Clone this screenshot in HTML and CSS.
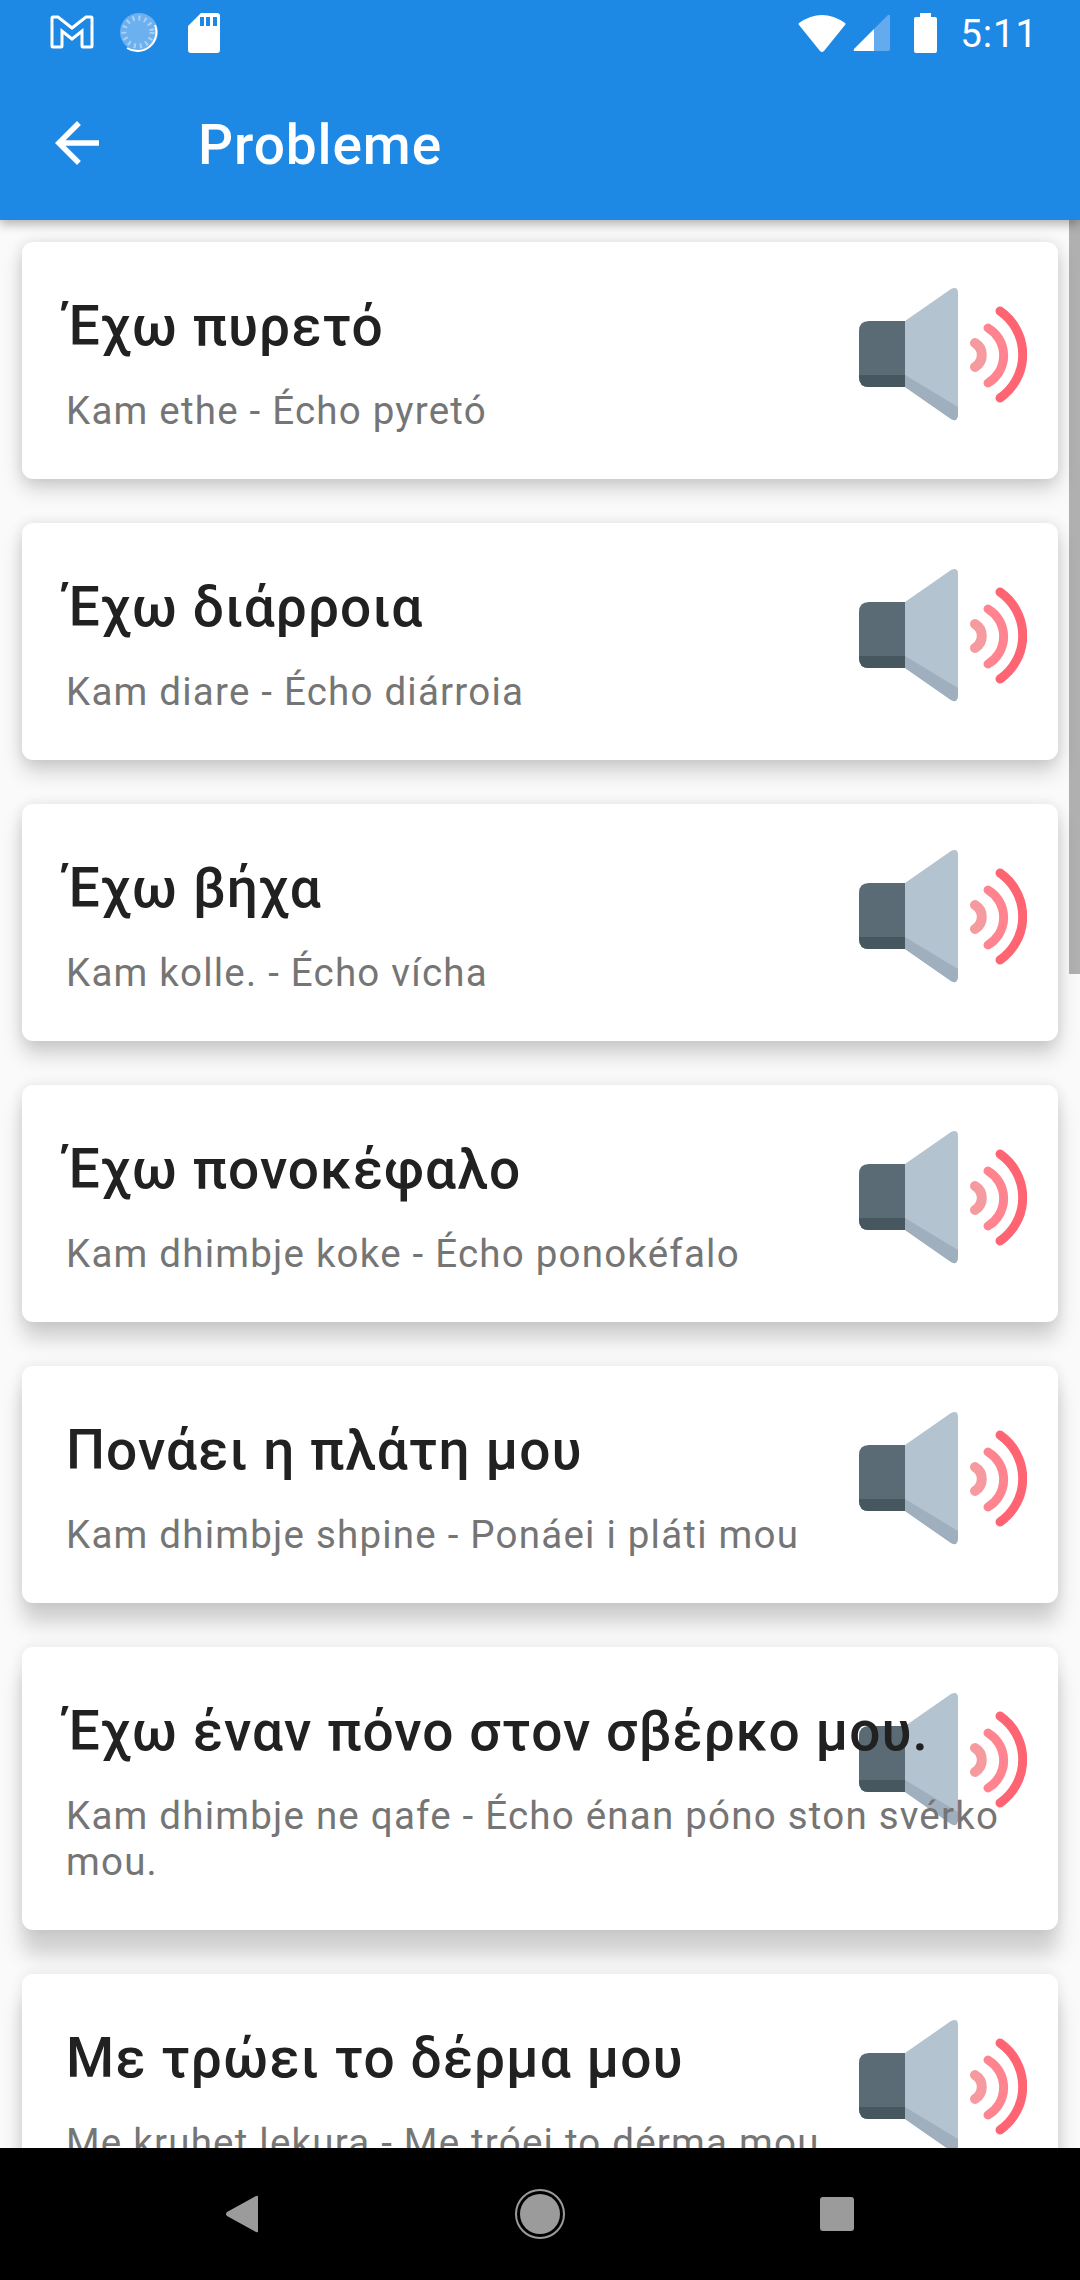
FILE: index.html
```html
<!DOCTYPE html>
<html lang="el">
<head>
    <meta charset="UTF-8">
    <meta name="viewport" content="width=device-width, initial-scale=1.0">
    <title>Probleme</title>
    <link rel="stylesheet" href="styles.css">
</head>
<body>
<svg class="defs" width="0" height="0">
    <symbol id="speaker" viewBox="0 0 168 134">
        <path d="M46 34H10Q0 34 0 44V90Q0 100 10 100H46Z" fill="#5a6b75"/>
        <path d="M0 88V90Q0 100 10 100H46V88Z" fill="#47575f"/>
        <path d="M46 34L92 2Q99 -1 99 6V126Q99 136 92 132L46 100Z" fill="#b4c3d0"/>
        <path d="M46 88L99 120V126Q99 136 92 132L46 100Z" fill="#9fafbe"/>
        <path d="M116 56A14 14 0 0 1 116 80" class="wave wave-in"/>
        <path d="M129 41A32 32 0 0 1 129 96" class="wave wave-mid"/>
        <path d="M141 24A53 53 0 0 1 141 111" class="wave wave-out"/>
    </symbol>
</svg>

<div class="screen">
    <header class="top">
        <div class="status">
            <div class="status-left">
                <svg class="ic-gmail" viewBox="0 0 44 34"><path d="M3 2H8L22 13L36 2H41Q42 2 42 3V31Q42 32 41 32H33Q32 32 32 31V16L22 24L12 16V31Q12 32 11 32H3Q2 32 2 31V3Q2 2 3 2Z" fill="none" stroke="#fff" stroke-width="3"/></svg>
                <svg class="ic-sync" viewBox="0 0 40 40">
                    <circle cx="20" cy="19" r="19" fill="#6cb0f0"/>
                    <path d="M36 12A19 19 0 0 1 8 35" fill="none" stroke="#fff" stroke-width="2"/>
                    <circle cx="19" cy="19" r="14" fill="none" stroke="#a9d0f5" stroke-width="5" stroke-dasharray="2 4"/>
                </svg>
                <svg class="ic-sd" viewBox="0 0 32 40"><path d="M13 0H29Q32 0 32 3V37Q32 40 29 40H3Q0 40 0 37V13Z" fill="#fff"/><path d="M12 4h4v9h-4zM18 4h4v9h-4zM25 4h4v9h-4z" fill="#1e88e5"/></svg>
            </div>
            <div class="status-right">
                <svg class="ic-wifi" viewBox="0 0 48 38"><path d="M1 9Q24 -7 47 9Q48 10 47 11L26 37Q24 39 22 37L1 11Q0 10 1 9Z" fill="#fff"/></svg>
                <svg class="ic-signal" viewBox="0 0 37 38">
                    <path d="M21 15L35 1Q37 0 37 2V35Q37 37 35 37H21Z" fill="#64aaee"/>
                    <path d="M21 15V37H2Q0 37 1 35Z" fill="#fff"/>
                </svg>
                <svg class="ic-batt" viewBox="0 0 23 40"><path d="M6 0H17V4H21Q23 4 23 6V38Q23 40 21 40H2Q0 40 0 38V6Q0 4 2 4H6Z" fill="#fff"/></svg>
                <span class="clock">5:11</span>
            </div>
        </div>
        <div class="toolbar">
            <svg class="ic-back" viewBox="0 0 24 24"><path d="M20 11H7.83l5.59-5.59L12 4l-8 8 8 8 1.41-1.41L7.83 13H20v-2z" fill="#fff"/></svg>
            <h1>Probleme</h1>
        </div>
    </header>

    <main class="list">
        <div class="thumb"></div>

        <div class="card card-1">
            <svg class="speaker"><use href="#speaker"/></svg>
            <div class="card-text">
                <h2>Έχω πυρετό</h2>
                <p>Kam ethe - Écho pyretó</p>
            </div>
        </div>
        <div class="card card-2">
            <svg class="speaker"><use href="#speaker"/></svg>
            <div class="card-text">
                <h2>Έχω διάρροια</h2>
                <p>Kam diare - Écho diárroia</p>
            </div>
        </div>
        <div class="card card-3">
            <svg class="speaker"><use href="#speaker"/></svg>
            <div class="card-text">
                <h2>Έχω βήχα</h2>
                <p>Kam kolle. - Écho vícha</p>
            </div>
        </div>
        <div class="card card-4">
            <svg class="speaker"><use href="#speaker"/></svg>
            <div class="card-text">
                <h2>Έχω πονοκέφαλο</h2>
                <p>Kam dhimbje koke - Écho ponokéfalo</p>
            </div>
        </div>
        <div class="card card-5">
            <svg class="speaker"><use href="#speaker"/></svg>
            <div class="card-text">
                <h2>Πονάει η πλάτη μου</h2>
                <p>Kam dhimbje shpine - Ponáei i pláti mou</p>
            </div>
        </div>
        <div class="card card-6">
            <svg class="speaker"><use href="#speaker"/></svg>
            <div class="card-text">
                <h2>Έχω έναν πόνο στον σβέρκο μου.</h2>
                <p>Kam dhimbje ne qafe - Écho énan póno ston svérko mou.</p>
            </div>
        </div>
        <div class="card card-6">
            <svg class="speaker"><use href="#speaker"/></svg>
            <div class="card-text">
                <h2>Με τρώει το δέρμα μου</h2>
                <p>Me kruhet lekura - Me tróei to dérma mou</p>
            </div>
        </div>
    </main>

    <nav class="navbar">
        <svg class="nav-back" viewBox="0 0 32 38"><path d="M30 1Q32 0 32 2V36Q32 38 30 37L1 21Q-1 19 1 17Z" fill="#9b9b9b"/></svg>
        <svg class="nav-home" viewBox="0 0 50 50"><circle cx="25" cy="25" r="24" fill="none" stroke="#9b9b9b" stroke-width="2"/><circle cx="25" cy="25" r="20" fill="#9b9b9b"/></svg>
        <div class="nav-square"></div>
    </nav>
</div>
</body>
</html>
```
FILE: styles.css
```css
* {
    box-sizing: border-box;
}

body {
    margin: 0;
    font-family: Roboto, "Noto Sans", sans-serif;
    background-color: #fafafa;
}

.defs {
    display: block;
    height: 0;
}

.screen {
    display: flex;
    flex-direction: column;
    width: 1080px;
    height: 2280px;
    overflow: hidden;
}

.top {
    background-color: #1e88e5;
    color: #fff;
    height: 220px;
    box-shadow: 0 4px 10px rgba(0, 0, 0, 0.3);
    position: relative;
    z-index: 2;
    flex: none;
}

.status {
    display: flex;
    justify-content: space-between;
    align-items: center;
    height: 66px;
    padding: 0 42px 0 50px;
}

.status-left,
.status-right {
    display: flex;
    align-items: center;
}

.ic-gmail {
    width: 44px;
    height: 34px;
    margin-bottom: 2px;
}

.ic-sync {
    width: 40px;
    height: 40px;
    margin-left: 25px;
}

.ic-sd {
    width: 32px;
    height: 40px;
    margin-left: 29px;
}

.ic-wifi {
    width: 48px;
    height: 38px;
}

.ic-signal {
    width: 37px;
    height: 38px;
    margin-left: 7px;
}

.ic-batt {
    width: 23px;
    height: 40px;
    margin-left: 24px;
}

.clock {
    font-size: 38.5px;
    letter-spacing: 0.9px;
    margin-left: 23px;
}

.toolbar {
    display: flex;
    align-items: center;
    height: 154px;
    padding: 3px 0 0 44px;
}

.ic-back {
    width: 66px;
    height: 66px;
    flex: none;
    margin-top: -3px;
}

h1 {
    margin: 0 0 0 88px;
    font-size: 55px;
    font-weight: 500;
    letter-spacing: 0.9px;
}

.list {
    flex: 1;
    min-height: 0;
    overflow: hidden;
    position: relative;
    padding: 22px 22px 0;
}

.thumb {
    position: absolute;
    top: 0;
    right: 0;
    width: 11px;
    height: 754px;
    background-color: #b0b0b0;
}

/* shadow gets longer further down the screen */
.card {
    --drop: 10px;
    position: relative;
    background-color: #fff;
    border-radius: 11px;
    padding: 52px 44px 45px;
    margin-bottom: 44px;
    box-shadow: 0 var(--drop) 20px rgba(0, 0, 0, 0.17), 0 0 14px rgba(0, 0, 0, 0.09);
}

.card-2 {
    --drop: 12px;
}

.card-3 {
    --drop: 14px;
}

.card-4 {
    --drop: 17px;
}

.card-5 {
    --drop: 20px;
}

.card-6 {
    --drop: 25px;
}

.speaker {
    position: absolute;
    top: 45px;
    left: 837px;
    width: 168px;
    height: 134px;
    filter: blur(0.5px);
}

.wave {
    fill: none;
    stroke-linecap: round;
    stroke-width: 9px;
}

.wave-in {
    stroke: #f59a9f;
    stroke-width: 10px;
}

.wave-mid {
    stroke: #ff848f;
}

.wave-out {
    stroke: #ff6472;
}

.card-text {
    position: relative;
}

h2 {
    margin: 0 0 30px;
    font-size: 55px;
    font-weight: 500;
    letter-spacing: 1.05px;
    color: #212121;
}

.card-text p {
    margin: 0;
    font-size: 38.5px;
    line-height: 46px;
    letter-spacing: 1.22px;
    color: #757575;
}

.navbar {
    flex: none;
    position: relative;
    z-index: 2;
    display: flex;
    align-items: center;
    justify-content: space-between;
    height: 132px;
    padding: 0 226px;
    background-color: #000;
}

.nav-back {
    width: 32px;
    height: 38px;
}

.nav-home {
    width: 50px;
    height: 50px;
    margin-left: 2px;
}

.nav-square {
    width: 34px;
    height: 34px;
    border-radius: 3px;
    background-color: #9b9b9b;
}
```
